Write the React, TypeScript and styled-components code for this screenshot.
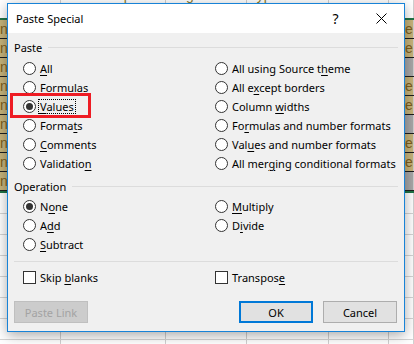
import styled, { createGlobalStyle } from 'styled-components';

const GlobalStyle = createGlobalStyle`
  html, body {
    margin: 0;
    padding: 0;
    background: #ffffff;
  }
`;

const Screen = styled.div`
  position: relative;
  width: 414px;
  height: 344px;
  overflow: hidden;
  background: #ffffff;
`;

/* ---------- spreadsheet behind the dialog ---------- */

const Sheet = styled.div`
  display: flex;
  flex-direction: column;
  margin-top: -16px;
  font-family: 'Liberation Sans', Arial, sans-serif;
  font-size: 14px;
`;

const SheetRow = styled.div<{ $kind: 'head' | 'tan' | 'gray' | 'blank' }>`
  display: grid;
  grid-template-columns: 61px 105px 81px 82px 60px 25px;
  box-sizing: border-box;
  height: ${(p) => (p.$kind === 'head' ? '36px' : p.$kind === 'blank' ? '21px' : '19px')};
  border-bottom: ${(p) =>
    p.$kind === 'head'
      ? '2px solid #217346'
      : p.$kind === 'blank'
        ? '1px solid #d4d4d4'
        : '1px solid #1e1e1e'};
`;

const SheetCell = styled.div<{ $fill: string; $indent?: number }>`
  box-sizing: border-box;
  border-right: 1px solid #d0d0d0;
  background: ${(p) => p.$fill};
  color: #7e5f1c;
  white-space: nowrap;
  overflow: hidden;
  line-height: 18px;
  padding-left: ${(p) => p.$indent ?? 2}px;
`;

const HeadCell = styled(SheetCell)`
  color: #8e7d2c;
  padding-top: 3px;
  line-height: 16px;
`;

const GreenRule = styled.div`
  height: 2px;
  background: #217346;
`;

/* ---------- dialog ---------- */

const Dialog = styled.div`
  position: absolute;
  left: 7px;
  top: 3px;
  width: 398px;
  height: 329px;
  box-sizing: border-box;
  border: 1px solid #1883d7;
  background: #f0f0f0;
  box-shadow: 0 3px 12px rgba(0, 0, 0, 0.35);
  display: flex;
  flex-direction: column;
  font-family: 'Noto Sans', 'Open Sans', sans-serif;
  font-size: 11px;
  color: #000000;
`;

const TitleBar = styled.div`
  height: 29px;
  background: #ffffff;
  display: flex;
  align-items: center;
`;

const Title = styled.div`
  flex: 1;
  padding-left: 8px;
  font-size: 11px;
`;

const CaptionButton = styled.div<{ $w: number }>`
  width: ${(p) => p.$w}px;
  height: 29px;
  display: flex;
  align-items: center;
  justify-content: center;
  font-size: 14px;
`;

const Body = styled.div`
  display: flex;
  flex-direction: column;
  padding: 0 6px;
`;

const GroupHeader = styled.div<{ $top: number }>`
  margin-top: ${(p) => p.$top}px;
  height: 14px;
  display: flex;
  align-items: center;
  gap: 6px;
`;

const Line = styled.div`
  flex: 1;
  height: 1px;
  background: #dcdcdc;
`;

const OptionGrid = styled.div<{ $rows: number; $top: number }>`
  margin-top: ${(p) => p.$top}px;
  padding-left: 9px;
  display: grid;
  grid-template-columns: 192px 1fr;
  grid-template-rows: repeat(${(p) => p.$rows}, 19px);
  grid-auto-flow: column;
`;

const Option = styled.div`
  position: relative;
  display: flex;
  align-items: center;
  gap: 4px;
  white-space: nowrap;
`;

const RadioDot = styled.span<{ $on?: boolean }>`
  box-sizing: border-box;
  width: 13px;
  height: 13px;
  border: 1px solid #333333;
  border-radius: 50%;
  background: #ffffff;
  display: flex;
  align-items: center;
  justify-content: center;

  &::after {
    content: '';
    width: 7px;
    height: 7px;
    border-radius: 50%;
    background: ${(p) => (p.$on ? '#333333' : 'transparent')};
  }
`;

const CheckBox = styled.span`
  box-sizing: border-box;
  width: 13px;
  height: 13px;
  border: 1px solid #333333;
  background: #ffffff;
`;

const Label = styled.span<{ $focus?: boolean }>`
  padding: 0 1px;
  margin-left: -1px;
  line-height: 13px;
  outline: ${(p) => (p.$focus ? '1px dotted #000000' : 'none')};

  u {
    text-decoration-thickness: 1px;
    text-underline-offset: 2px;
  }
`;

const Highlight = styled.div`
  position: absolute;
  left: -13px;
  top: -4px;
  width: 81px;
  height: 25px;
  box-sizing: border-box;
  border: 3px solid #ee1c24;
  pointer-events: none;
`;

const Separator = styled.div`
  margin-top: 7px;
  height: 1px;
  background: #dcdcdc;
`;

const ButtonRow = styled.div`
  margin-top: 14px;
  display: flex;
  justify-content: space-between;
`;

const ButtonGroup = styled.div`
  display: flex;
  gap: 10px;
  margin-right: 1px;
`;

const Button = styled.div<{ $variant?: 'default' | 'primary' | 'disabled' }>`
  box-sizing: border-box;
  width: 74px;
  height: 22px;
  display: flex;
  align-items: center;
  justify-content: center;
  background: ${(p) => (p.$variant === 'disabled' ? '#cccccc' : '#e1e1e1')};
  color: ${(p) => (p.$variant === 'disabled' ? '#a3a3a3' : '#000000')};
  border: ${(p) =>
    p.$variant === 'primary'
      ? '2px solid #0078d7'
      : p.$variant === 'disabled'
        ? '1px solid #bfbfbf'
        : '1px solid #adadad'};
`;

type Opt = { pre: string; key: string; post: string; on?: boolean; focus?: boolean; mark?: boolean };

const pasteLeft: Opt[] = [
  { pre: '', key: 'A', post: 'll' },
  { pre: '', key: 'F', post: 'ormulas' },
  { pre: '', key: 'V', post: 'alues', on: true, focus: true, mark: true },
  { pre: 'Forma', key: 't', post: 's' },
  { pre: '', key: 'C', post: 'omments' },
  { pre: 'Validatio', key: 'n', post: '' },
];

const pasteRight: Opt[] = [
  { pre: 'All using Source t', key: 'h', post: 'eme' },
  { pre: 'All e', key: 'x', post: 'cept borders' },
  { pre: 'Column ', key: 'w', post: 'idths' },
  { pre: 'Fo', key: 'r', post: 'mulas and number formats' },
  { pre: 'Val', key: 'u', post: 'es and number formats' },
  { pre: 'All mer', key: 'g', post: 'ing conditional formats' },
];

const opLeft: Opt[] = [
  { pre: 'N', key: 'o', post: 'ne', on: true },
  { pre: 'A', key: 'd', post: 'd' },
  { pre: '', key: 'S', post: 'ubtract' },
];

const opRight: Opt[] = [
  { pre: '', key: 'M', post: 'ultiply' },
  { pre: 'D', key: 'i', post: 'vide' },
];

function RadioOption({ o }: { o: Opt }) {
  return (
    <Option>
      <RadioDot $on={o.on} />
      <Label $focus={o.focus}>
        {o.pre}
        <u>{o.key}</u>
        {o.post}
      </Label>
      {o.mark && <Highlight />}
    </Option>
  );
}

const dataRows: ('tan' | 'gray')[] = ['tan', 'tan', 'gray', 'tan', 'tan', 'gray', 'tan', 'tan', 'gray'];
const TAN = '#c7b47b';
const GRAY = '#a8a8a8';

export default function App() {
  return (
    <Screen>
      <GlobalStyle />
      <Sheet>
        <SheetRow $kind="head">
          <HeadCell $fill="#fff" $indent={0}>Division</HeadCell>
          <HeadCell $fill="#fff">Sub-Group</HeadCell>
          <HeadCell $fill="#fff">Region</HeadCell>
          <HeadCell $fill="#fff">Type</HeadCell>
          <HeadCell $fill="#fff" />
          <HeadCell $fill="#fff" $indent={6}>Dea</HeadCell>
        </SheetRow>
        {dataRows.map((k, i) => (
          <SheetRow key={i} $kind={k}>
            <SheetCell $fill={TAN} $indent={0}>n</SheetCell>
            <SheetCell $fill={k === 'tan' ? TAN : GRAY} />
            <SheetCell $fill={k === 'tan' ? TAN : GRAY} />
            <SheetCell $fill={k === 'tan' ? TAN : GRAY} />
            <SheetCell $fill={k === 'tan' ? TAN : GRAY} />
            <SheetCell $fill={k === 'tan' ? TAN : GRAY} $indent={6}>
              {k === 'tan' ? 'Dea' : ''}
            </SheetCell>
          </SheetRow>
        ))}
        <GreenRule />
        {Array.from({ length: 8 }).map((_, i) => (
          <SheetRow key={`b${i}`} $kind="blank">
            {Array.from({ length: 6 }).map((__, j) => (
              <SheetCell key={j} $fill="#fff" />
            ))}
          </SheetRow>
        ))}
      </Sheet>

      <Dialog>
        <TitleBar>
          <Title>Paste Special</Title>
          <CaptionButton $w={45}>?</CaptionButton>
          <CaptionButton $w={46}>
            <svg width="11" height="11" viewBox="0 0 11 11">
              <path d="M0.5 0.5 L10.5 10.5 M10.5 0.5 L0.5 10.5" stroke="#000" strokeWidth="1" fill="none" />
            </svg>
          </CaptionButton>
        </TitleBar>
        <Body>
          <GroupHeader $top={7}>
            <span>Paste</span>
            <Line />
          </GroupHeader>
          <OptionGrid $rows={6} $top={5}>
            {pasteLeft.map((o, i) => (
              <RadioOption key={`l${i}`} o={o} />
            ))}
            {pasteRight.map((o, i) => (
              <RadioOption key={`r${i}`} o={o} />
            ))}
          </OptionGrid>

          <GroupHeader $top={6}>
            <span>Operation</span>
            <Line />
          </GroupHeader>
          <OptionGrid $rows={3} $top={4}>
            {opLeft.map((o, i) => (
              <RadioOption key={`ol${i}`} o={o} />
            ))}
            {opRight.map((o, i) => (
              <RadioOption key={`or${i}`} o={o} />
            ))}
          </OptionGrid>

          <Separator />

          <OptionGrid $rows={1} $top={6}>
            <Option>
              <CheckBox />
              <Label>
                Skip <u>b</u>lanks
              </Label>
            </Option>
            <Option>
              <CheckBox />
              <Label>
                Transpos<u>e</u>
              </Label>
            </Option>
          </OptionGrid>

          <ButtonRow>
            <Button $variant="disabled">Paste Link</Button>
            <ButtonGroup>
              <Button $variant="primary">OK</Button>
              <Button>Cancel</Button>
            </ButtonGroup>
          </ButtonRow>
        </Body>
      </Dialog>
    </Screen>
  );
}
